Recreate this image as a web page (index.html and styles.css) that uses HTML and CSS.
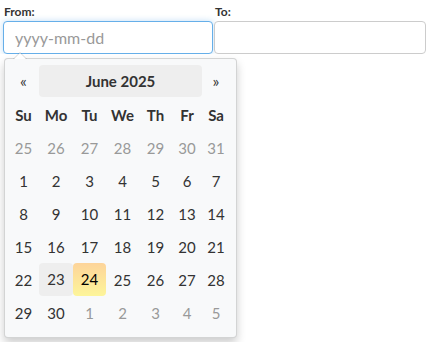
FILE: index.html
```html
<!DOCTYPE html>
<html lang="en">

<head>
  <meta charset="UTF-8" />
  <meta name="viewport" content="width=device-width, initial-scale=1.0" />
  <title>Date range</title>
  <link rel="stylesheet" href="styles.css">
</head>

<body>

  <div class="intervalo">
    <div class="campo campo-de">
      <label for="de">From:</label>
      <input id="de" type="text" class="entrada foco" placeholder="yyyy-mm-dd" />
    </div>
    <div class="campo campo-ate">
      <label for="ate">To:</label>
      <input id="ate" type="text" class="entrada" />
    </div>
  </div>

  <!-- calendario aberto sob o campo "From" -->
  <div class="datepicker">
    <table class="tabela">
      <colgroup>
        <col style="width: 31px">
        <col style="width: 34px">
        <col style="width: 33px">
        <col style="width: 33px">
        <col style="width: 33px">
        <col style="width: 30px">
        <col style="width: 28px">
      </colgroup>
      <thead>
        <tr class="topo">
          <th class="seta">«</th>
          <th colspan="5"><div class="mes">June 2025</div></th>
          <th class="seta">»</th>
        </tr>
        <tr class="dias-semana">
          <th>Su</th><th>Mo</th><th>Tu</th><th>We</th><th>Th</th><th>Fr</th><th>Sa</th>
        </tr>
      </thead>
      <tbody>
        <tr>
          <td class="fora">25</td><td class="fora">26</td><td class="fora">27</td><td class="fora">28</td>
          <td class="fora">29</td><td class="fora">30</td><td class="fora">31</td>
        </tr>
        <tr>
          <td>1</td><td>2</td><td>3</td><td>4</td><td>5</td><td>6</td><td>7</td>
        </tr>
        <tr>
          <td>8</td><td>9</td><td>10</td><td>11</td><td>12</td><td>13</td><td>14</td>
        </tr>
        <tr>
          <td>15</td><td>16</td><td>17</td><td>18</td><td>19</td><td>20</td><td>21</td>
        </tr>
        <tr>
          <td>22</td><td><span class="dia focado">23</span></td><td><span class="dia hoje">24</span></td>
          <td>25</td><td>26</td><td>27</td><td>28</td>
        </tr>
        <tr>
          <td>29</td><td>30</td><td class="fora">1</td><td class="fora">2</td>
          <td class="fora">3</td><td class="fora">4</td><td class="fora">5</td>
        </tr>
      </tbody>
    </table>
  </div>

</body>

</html>
```

FILE: styles.css
```css
body {
  font-family: Lato, "Liberation Sans", sans-serif;
  margin: 0;
  padding: 0;
  background: #fff;
  color: #333;
}

.intervalo {
  display: flex;
  gap: 1px;
  padding-left: 3px;
}

.campo {
  display: flex;
  flex-direction: column;
}

.campo-de {
  width: 210px;
}

.campo-ate {
  width: 212px;
}

.campo label {
  font-size: 12px;
  font-weight: bold;
  line-height: 13px;
  padding: 5px 0 0 1px;
  margin-bottom: 3px;
  color: #333;
}

.entrada {
  box-sizing: border-box;
  height: 33px;
  width: 100%;
  margin: 0;
  border: 1px solid #ccc;
  border-radius: 4px;
  padding: 0 11px;
  font-family: Lato, "Liberation Sans", sans-serif;
  font-size: 16px;
  color: #333;
  background: #fff;
  outline: none;
}

.entrada::placeholder {
  color: #999;
}

.foco {
  border-color: #66afe9;
  box-shadow: 0 0 6px rgba(102, 175, 233, 0.4);
}

.datepicker {
  position: absolute;
  top: 58px;
  left: 4px;
  width: 233px;
  box-sizing: border-box;
  padding: 6px 0 8px 3px;
  background: #f8f9fa;
  border: 1px solid rgba(0, 0, 0, 0.15);
  border-radius: 4px;
  box-shadow: 0 5px 10px rgba(0, 0, 0, 0.2);
  z-index: 10;
}

.datepicker::before {
  content: "";
  position: absolute;
  top: -7px;
  left: 8px;
  border-left: 7px solid transparent;
  border-right: 7px solid transparent;
  border-bottom: 7px solid rgba(0, 0, 0, 0.15);
}

.datepicker::after {
  content: "";
  position: absolute;
  top: -6px;
  left: 9px;
  border-left: 6px solid transparent;
  border-right: 6px solid transparent;
  border-bottom: 6px solid #fff;
}

.tabela {
  border-collapse: collapse;
  table-layout: fixed;
  width: 222px;
}

.tabela th,
.tabela td {
  padding: 0;
  height: 33px;
  text-align: center;
  font-size: 15px;
}

.tabela th {
  font-weight: bold;
  color: #333;
}

.topo th {
  vertical-align: top;
}

.topo .seta {
  font-weight: normal;
  line-height: 32px;
  font-size: 16px;
}

.mes {
  height: 32px;
  line-height: 32px;
  background: #eee;
  border-radius: 4px;
}

.tabela td {
  color: #333;
}

.tabela td.fora {
  color: #999;
}

.dia {
  display: block;
  height: 33px;
  line-height: 33px;
  border-radius: 4px;
}

.focado {
  background: #eee;
}

.hoje {
  color: #000;
  background: linear-gradient(to bottom, #fdd49a, #fdf59a);
}
```
